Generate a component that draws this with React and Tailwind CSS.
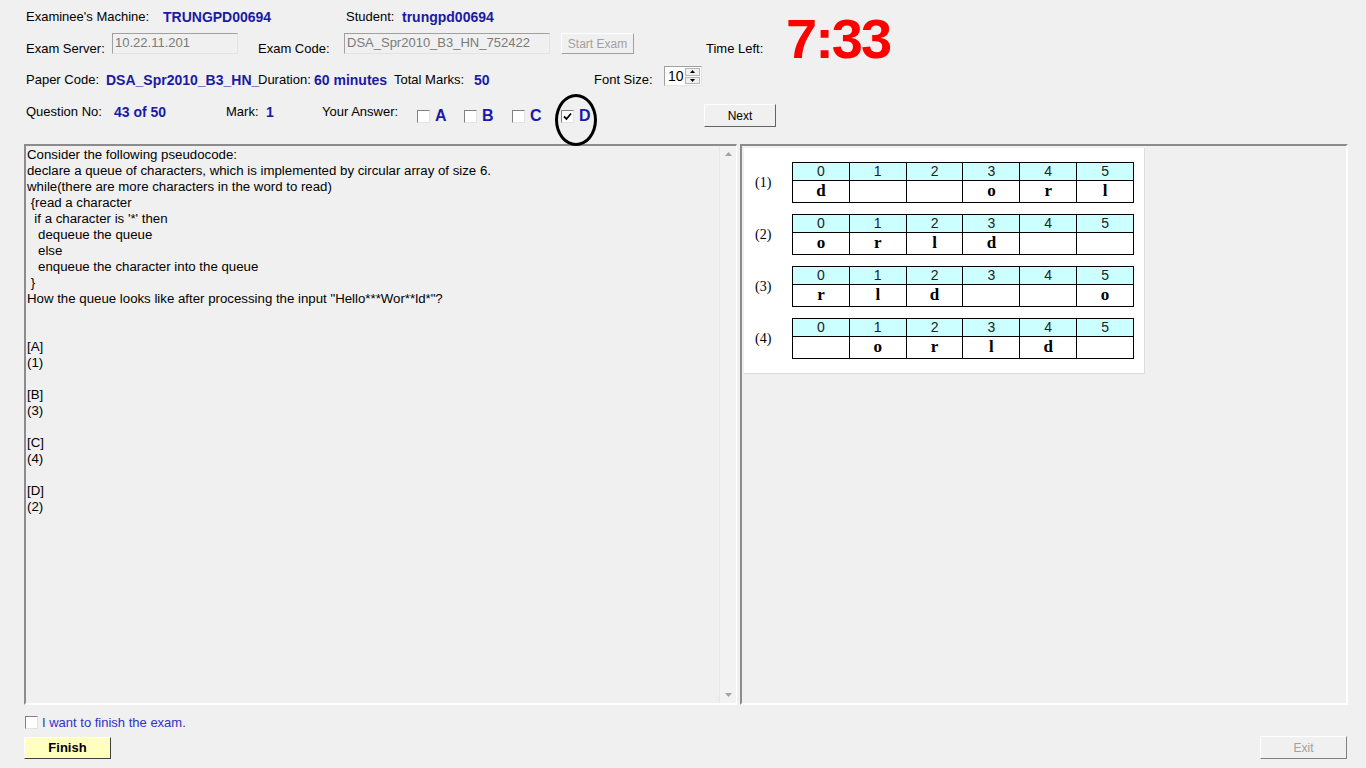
import React from "react";

const blue = "text-[#1a1aa6]";

const Checkbox = ({ checked = false }) => (
  <div className="w-[13px] h-[13px] bg-white border border-t-[#808080] border-l-[#808080] border-r-[#e3e3e3] border-b-[#e3e3e3] flex items-center justify-center shrink-0">
    {checked && (
      <svg width="9" height="9" viewBox="0 0 9 9">
        <path d="M1 4.5 L3.5 7 L8 1.5" stroke="#000" strokeWidth="1.8" fill="none" />
      </svg>
    )}
  </div>
);

const Answer = ({ letter, checked, width }) => (
  <div className={`flex items-start ${width}`}>
    <div className="mt-[6px]">
      <Checkbox checked={checked} />
    </div>
    <span className={`ml-[5px] mt-[4px] text-[16px] leading-[16px] font-bold ${blue}`}>{letter}</span>
  </div>
);

const tables = [
  ["d", "", "", "o", "r", "l"],
  ["o", "r", "l", "d", "", ""],
  ["r", "l", "d", "", "", "o"],
  ["", "o", "r", "l", "d", ""],
];

const lines = [
  "Consider the following pseudocode:",
  "declare a queue of characters, which is implemented by circular array of size 6.",
  "while(there are more characters in the word to read)",
  " {read a character",
  "  if a character is '*' then",
  "   dequeue the queue",
  "   else",
  "   enqueue the character into the queue",
  " }",
  'How the queue looks like after processing the input "Hello***Wor**ld*"?',
  "",
  "",
  "[A]",
  "(1)",
  "",
  "[B]",
  "(3)",
  "",
  "[C]",
  "(4)",
  "",
  "[D]",
  "(2)",
];

export default function App() {
  return (
    <div
      className="relative w-[1366px] h-[768px] bg-[#f0f0f0] overflow-hidden text-[13px] leading-[16px] text-black"
      style={{ fontFamily: '"Liberation Sans", Arial, sans-serif' }}
    >
      {/* ---------------- Header ---------------- */}
      <div className="pl-[26px] pt-[9px]">
        <div className="flex h-[63px]">
          <div className="w-[680px] flex flex-col">
            <div className="flex h-[16px] items-center">
              <span className="w-[137px]">Examinee's Machine:</span>
              <span className={`w-[183px] font-bold text-[14px] ${blue}`}>TRUNGPD00694</span>
              <span className="w-[56px]">Student:</span>
              <span className={`font-bold text-[14px] ${blue}`}>trungpd00694</span>
            </div>
            <div className="flex items-start mt-[8px]">
              <span className="w-[86px] mt-[8px]">Exam Server:</span>
              <div className="w-[126px] h-[21px] border border-t-[#a0a0a0] border-l-[#a0a0a0] border-r-[#e3e3e3] border-b-[#e3e3e3] text-[#7a7a7a] pl-[2px] leading-[18px]">
                10.22.11.201
              </div>
              <span className="w-[86px] ml-[20px] mt-[8px]">Exam Code:</span>
              <div className="w-[206px] h-[21px] border border-t-[#a0a0a0] border-l-[#a0a0a0] border-r-[#e3e3e3] border-b-[#e3e3e3] text-[#7a7a7a] pl-[2px] leading-[18px]">
                DSA_Spr2010_B3_HN_752422
              </div>
              <div className="ml-[11px] w-[73px] h-[21px] border border-t-white border-l-white border-r-[#a0a0a0] border-b-[#a0a0a0] text-[#a0a0a0] text-[12px] flex items-center justify-center">
                Start Exam
              </div>
            </div>
          </div>
          <span className="w-[80px] mt-[32px]">Time Left:</span>
          <span className="mt-[2px] text-[56px] leading-[56px] font-bold text-[#ff0000] tracking-[-2px]">7:33</span>
        </div>

        <div className="flex items-start h-[16px]">
          <span className="w-[80px]">Paper Code:</span>
          <span className={`w-[152px] font-bold text-[14px] whitespace-nowrap ${blue}`}>DSA_Spr2010_B3_HN_</span>
          <span className="w-[56px]">Duration:</span>
          <span className={`w-[80px] font-bold text-[14px] ${blue}`}>60 minutes</span>
          <span className="w-[80px]">Total Marks:</span>
          <span className={`w-[120px] font-bold text-[14px] ${blue}`}>50</span>
          <span className="w-[70px]">Font Size:</span>
          <div className="-mt-[6px] w-[38px] h-[20px] bg-white border border-t-[#a0a0a0] border-l-[#a0a0a0] border-r-[#e3e3e3] border-b-[#e3e3e3] flex">
            <span className="flex-1 pl-[3px] text-[14px] leading-[18px]">10</span>
            <div className="w-[17px] flex flex-col gap-[1px] p-[1px]">
              <div className="flex-1 bg-[#f0f0f0] border border-[#b5b5b5] flex items-center justify-center">
                <svg width="5" height="3" viewBox="0 0 5 3"><path d="M0 3 L2.5 0 L5 3Z" fill="#000" /></svg>
              </div>
              <div className="flex-1 bg-[#f0f0f0] border border-[#b5b5b5] flex items-center justify-center">
                <svg width="5" height="3" viewBox="0 0 5 3"><path d="M0 0 L2.5 3 L5 0Z" fill="#000" /></svg>
              </div>
            </div>
          </div>
        </div>

        <div className="flex items-start h-[22px] mt-[16px]">
          <span className="w-[88px]">Question No:</span>
          <span className={`w-[112px] font-bold text-[14px] ${blue}`}>43 of 50</span>
          <span className="w-[40px]">Mark:</span>
          <span className={`w-[56px] font-bold text-[14px] ${blue}`}>1</span>
          <span className="w-[95px]">Your Answer:</span>
          <Answer letter="A" width="w-[47px]" />
          <Answer letter="B" width="w-[48px]" />
          <Answer letter="C" width="w-[49px]" />
          <Answer letter="D" checked width="w-[143px]" />
          <div className="w-[72px] h-[23px] bg-[#f0f0f0] border border-t-white border-l-white border-r-[#646464] border-b-[#646464] text-[12px] flex items-center justify-center">
            Next
          </div>
        </div>
      </div>

      {/* highlight ring around D */}
      <div className="absolute left-[555px] top-[94px] w-[42px] h-[52px] rounded-[50%] border-[3px] border-black" />

      {/* ---------------- Panels ---------------- */}
      <div className="flex pl-[24px] mt-[18px] h-[561px] gap-[3px]">
        <div className="w-[713px] h-full flex border-t-2 border-l-2 border-t-[#8c8c8c] border-l-[#8c8c8c] border-b-2 border-r border-b-white border-r-white">
          <div className="flex-1 pl-[1px] pt-[1px] whitespace-pre text-[13.25px]">
            {lines.map((l, i) => (
              <div key={i} className="h-[16px]">{l}</div>
            ))}
          </div>
          <div className="w-[17px] h-full flex flex-col justify-between items-center py-[6px] bg-[#f2f2f2] border-l border-[#e6e6e6]">
            <svg width="7" height="4" viewBox="0 0 7 4"><path d="M0 4 L3.5 0 L7 4Z" fill="#a3a3a3" /></svg>
            <svg width="7" height="4" viewBox="0 0 7 4"><path d="M0 0 L3.5 4 L7 0Z" fill="#a3a3a3" /></svg>
          </div>
        </div>

        <div className="w-[608px] h-full border-t-2 border-l-2 border-t-[#8c8c8c] border-l-[#8c8c8c] border-b-2 border-r-2 border-b-white border-r-white">
          <div className="ml-[2px] mt-[2px] w-[401px] h-[226px] bg-white border-r border-b border-[#dcdcdc] pt-[14px] pl-[11px] flex flex-col gap-[12px]">
            {tables.map((row, t) => (
              <div key={t} className="flex items-center h-[40px]">
                <span
                  className="w-[37px] text-[14px] pt-[2px]"
                  style={{ fontFamily: '"Liberation Serif", "Times New Roman", serif' }}
                >
                  ({t + 1})
                </span>
                <table className="border-collapse table-fixed w-[342px]">
                  <tbody>
                    <tr className="h-[18px] bg-[#ccffff]">
                      {[0, 1, 2, 3, 4, 5].map((n) => (
                        <td key={n} className="border border-black text-center text-[14px] leading-[16px] text-[#222] p-0">
                          {n}
                        </td>
                      ))}
                    </tr>
                    <tr className="h-[22px]">
                      {row.map((c, i) => (
                        <td
                          key={i}
                          className="border border-black text-center font-bold text-[17px] leading-[20px] p-0"
                          style={{ fontFamily: '"Liberation Serif", "Times New Roman", serif' }}
                        >
                          {c}
                        </td>
                      ))}
                    </tr>
                  </tbody>
                </table>
              </div>
            ))}
          </div>
        </div>
      </div>

      {/* ---------------- Footer ---------------- */}
      <div className="flex items-center pl-[25px] mt-[11px] h-[13px]">
        <Checkbox />
        <span className="ml-[4px] text-[#3030c8]">I want to finish the exam.</span>
      </div>
      <div className="flex justify-between items-start pl-[24px] pr-[19px] mt-[8px]">
        <div className="w-[87px] h-[22px] bg-[#ffffc0] border border-t-white border-l-white border-r-[#404040] border-b-[#404040] font-bold flex items-center justify-center">
          Finish
        </div>
        <div className="-mt-[1px] w-[87px] h-[23px] bg-[#f0f0f0] border border-t-white border-l-white border-r-[#808080] border-b-[#808080] text-[12px] text-[#a0a0a0] flex items-center justify-center">
          Exit
        </div>
      </div>
    </div>
  );
}
